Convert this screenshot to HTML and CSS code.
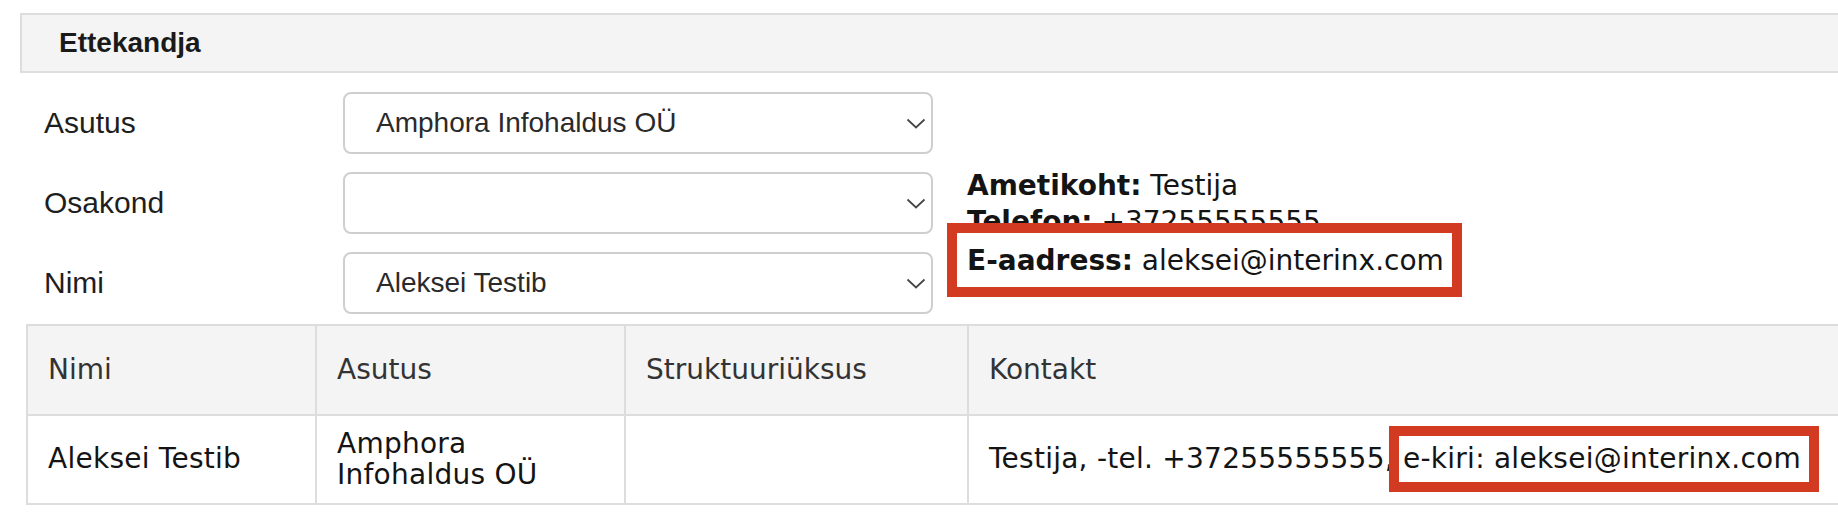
FILE: index.html
```html
<!DOCTYPE html>
<html lang="et">
<head>
<meta charset="utf-8">
<title>Ettekandja</title>
<link rel="stylesheet" href="styles.css">
</head>
<body>
<section class="panel">
  <div class="panel-head"><h2 class="panel-title">Ettekandja</h2></div>
  <div class="form">
    <div class="fields">
      <div class="field">
        <span class="field-label">Asutus</span>
        <div class="select"><span class="select-value">Amphora Infohaldus OÜ</span><svg class="chev" width="20" height="11" viewBox="0 0 20 11"><polyline points="1.5,1.5 10,9.5 18.5,1.5"/></svg></div>
      </div>
      <div class="field">
        <span class="field-label">Osakond</span>
        <div class="select"><span class="select-value"></span><svg class="chev" width="20" height="11" viewBox="0 0 20 11"><polyline points="1.5,1.5 10,9.5 18.5,1.5"/></svg></div>
      </div>
      <div class="field">
        <span class="field-label">Nimi</span>
        <div class="select"><span class="select-value">Aleksei Testib</span><svg class="chev" width="20" height="11" viewBox="0 0 20 11"><polyline points="1.5,1.5 10,9.5 18.5,1.5"/></svg></div>
      </div>
    </div>
    <div class="info">
      <div class="info-line"><b>Ametikoht:</b> Testija</div>
      <div class="info-line"><b>Telefon:</b> +37255555555</div>
      <div class="info-line mark-box"><b>E-aadress:</b> aleksei@interinx.com</div>
    </div>
  </div>
  <table class="grid">
    <colgroup>
      <col class="c1"><col class="c2"><col class="c3"><col class="c4">
    </colgroup>
    <thead>
      <tr><th>Nimi</th><th>Asutus</th><th>Struktuuriüksus</th><th>Kontakt</th></tr>
    </thead>
    <tbody>
      <tr>
        <td>Aleksei Testib</td>
        <td>Amphora Infohaldus OÜ</td>
        <td></td>
        <td>Testija, -tel. +37255555555, <span class="mark">e-kiri: aleksei@interinx.com</span></td>
      </tr>
    </tbody>
  </table>
</section>
</body>
</html>
```
FILE: styles.css
```css
html, body {
  margin: 0;
  padding: 0;
  background: #fff;
  overflow: hidden;
}
body {
  font-family: "Liberation Sans", Arial, sans-serif;
  color: #1e1e1e;
}
.panel {
  padding-top: 13px;
  width: 1900px;
}
.panel-head {
  margin-left: 20px;
  height: 60px;
  box-sizing: border-box;
  border: 2px solid #dddddd;
  border-right: none;
  background: #f4f4f4;
  display: flex;
  align-items: center;
  padding-left: 37px;
}
.panel-title {
  margin: 0;
  font-size: 28px;
  font-weight: bold;
  line-height: 1.15;
  color: #1a1a1a;
}
.form {
  display: flex;
  margin-top: 19px;
  padding-left: 44px;
}
.fields {
  display: flex;
  flex-direction: column;
  gap: 18px;
}
.field {
  display: flex;
  align-items: center;
}
.field-label {
  width: 299px;
  font-size: 30px;
  color: #1e1e1e;
}
.select {
  width: 590px;
  height: 62px;
  box-sizing: border-box;
  border: 2px solid #cfcfcf;
  border-radius: 8px;
  display: flex;
  align-items: center;
  justify-content: space-between;
  padding: 0 5px 0 31px;
  background: #fff;
}
.select-value {
  font-size: 28px;
  color: #2a2a2a;
}
.chev polyline {
  fill: none;
  stroke: #474747;
  stroke-width: 1.8;
}
.info {
  display: flex;
  flex-direction: column;
  align-items: flex-start;
  margin-left: 34px;
  padding-top: 76px;
  font-family: "DejaVu Sans", Verdana, sans-serif;
  font-size: 28px;
  line-height: 36.4px;
  color: #141414;
}
.info-line b {
  font-weight: bold;
}
.mark-box {
  position: relative;
  z-index: 1;
  margin-top: -18px;
  margin-left: -20px;
  border: 10px solid #d23a22;
  padding: 10px 8px 8px 10px;
  background: #fff;
}
.grid {
  margin-top: 10px;
  margin-left: 26px;
  width: 1860px;
  table-layout: fixed;
  border-collapse: separate;
  border-spacing: 0;
  border-top: 2px solid #dddddd;
  border-left: 2px solid #dddddd;
  font-family: "DejaVu Sans", Verdana, sans-serif;
  font-size: 28px;
}
.c1 { width: 289px; }
.c2 { width: 309px; }
.c3 { width: 343px; }
.grid th,
.grid td {
  border-right: 2px solid #dddddd;
  border-bottom: 2px solid #dddddd;
  padding: 0 20px;
  text-align: left;
  vertical-align: middle;
  line-height: 1.1;
}
.grid th {
  height: 88px;
  background: #f4f4f4;
  font-weight: normal;
  color: #333;
}
.grid td {
  height: 87px;
  color: #141414;
  letter-spacing: 0.25px;
}
.mark {
  position: relative;
  border: 10px solid #d23a22;
  padding: 6px 8px 7px 4px;
  margin-left: -14px;
  background: #fff;
}
```
